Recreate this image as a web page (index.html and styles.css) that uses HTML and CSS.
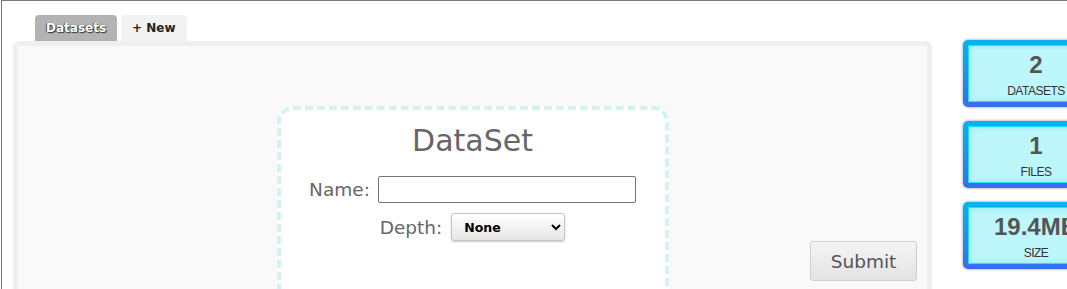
FILE: index.html
```html
<!DOCTYPE html>
<html>
<head>
<meta charset="utf-8">
<link rel="stylesheet" href="styles.css">
</head>
<body>
<div class="frame">
  <div class="main">
    <div class="tabs">
      <span class="tab tab-active">Datasets</span>
      <span class="tab">+ New</span>
    </div>
    <div class="panel">
      <div class="card">
        <h2 class="card-title">DataSet</h2>
        <div class="row">
          <label class="lbl" for="name">Name:</label>
          <input class="name-input" id="name" type="text">
        </div>
        <div class="row">
          <label class="lbl" for="depth">Depth:</label>
          <select class="depth-select" id="depth"><option>None</option></select>
        </div>
      </div>
      <button class="submit" type="button">Submit</button>
    </div>
  </div>
  <aside class="stats">
    <div class="stat"><div class="stat-inner"><div class="stat-num">2</div><div class="stat-lbl">DATASETS</div></div></div>
    <div class="stat"><div class="stat-inner"><div class="stat-num">1</div><div class="stat-lbl">FILES</div></div></div>
    <div class="stat"><div class="stat-inner"><div class="stat-num">19.4MB</div><div class="stat-lbl">SIZE</div></div></div>
  </aside>
</div>
</body>
</html>
```
FILE: styles.css
```css
html, body {
  margin: 0;
  padding: 0;
  background: #fff;
  overflow: hidden;
  height: 289px;
}
.frame {
  margin-left: 1px;
  border-top: 1px solid #7a7a7a;
  border-left: 1px solid #7a7a7a;
  height: 300px;
  display: flex;
  align-items: flex-start;
  padding: 14px 0 0 11px;
  box-sizing: border-box;
  font-family: "DejaVu Sans", Verdana, sans-serif;
}
.main {
  width: 919px;
  flex: none;
  display: flex;
  flex-direction: column;
}
.tabs {
  flex: none;
  display: flex;
  gap: 4px;
  padding-left: 22px;
  height: 26px;
}
.tab {
  display: flex;
  align-items: center;
  padding: 0 11px;
  font-size: 12px;
  font-weight: bold;
  color: #222;
  background: #f2f2f2;
  border-radius: 4px 4px 0 0;
}
.tab-active {
  background: #b3b3b3;
  color: #fff;
  text-shadow: 1px 1px 1px #333, -1px 0 1px #555;
}
.panel {
  flex: none;
  height: 260px;
  background: #f9f9f9;
  border: 5px solid #efefef;
  border-radius: 6px 6px 0 0;
  display: grid;
  grid-template-columns: 1fr 392px 1fr;
  align-items: start;
}
.card {
  grid-column: 2;
  margin-top: 60px;
  height: 220px;
  background: #fff;
  border: 4px dashed #d3f2f2;
  border-radius: 16px;
  padding-top: 13px;
  box-sizing: border-box;
}
.card-title {
  margin: 0 0 17px;
  text-align: center;
  font-size: 30px;
  line-height: 36px;
  font-weight: normal;
  color: #666;
}
.row {
  display: flex;
  justify-content: center;
  align-items: center;
  gap: 8px;
  margin-bottom: 10px;
}
.lbl {
  font-size: 18.5px;
  color: #666;
}
.name-input {
  width: 258px;
  height: 27px;
  box-sizing: border-box;
  border: 1px solid #767676;
  border-radius: 2px;
  margin: 0;
}
.depth-select {
  width: 114px;
  height: 28px;
  box-sizing: border-box;
  margin: 0 0 0 1px;
  padding-left: 8px;
  border: 1px solid #c4c4c4;
  border-radius: 3px;
  background: linear-gradient(#fff, #e6e6e6);
  box-shadow: 0 1px 2px rgba(0,0,0,0.2);
  font-family: "DejaVu Sans", Verdana, sans-serif;
  font-size: 12.5px;
  font-weight: bold;
  color: #000;
}
.submit {
  grid-column: 3;
  justify-self: end;
  margin: 195px 10px 0 0;
  width: 107px;
  height: 40px;
  border: 1px solid #cfcfcf;
  border-radius: 3px;
  background: linear-gradient(#f5f5f5, #e3e3e3);
  font-family: "DejaVu Sans", Verdana, sans-serif;
  font-size: 18.5px;
  color: #555;
  padding: 0;
}
.stats {
  margin-left: 31px;
  margin-top: 25px;
  display: flex;
  flex-direction: column;
  gap: 14px;
  flex: none;
  width: 146px;
  font-family: "Liberation Sans", Arial, sans-serif;
}
.stat {
  padding: 5px;
  border-radius: 5px;
  background: linear-gradient(#00b6ef, #3a6bf0);
  box-shadow: 0 0 3px rgba(0,0,0,0.45);
}
.stat-inner {
  border: 1px solid #1fe3f3;
  background: #bdf6fb;
  box-shadow: inset 0 0 6px #8ee9f4;
  text-align: center;
  padding: 6px 0 3px;
}
.stat-num {
  font-size: 24px;
  line-height: 26px;
  font-weight: bold;
  color: #555;
}
.stat-lbl {
  margin-top: 6px;
  font-size: 12px;
  line-height: 14px;
  letter-spacing: -0.5px;
  color: #333;
}
```
